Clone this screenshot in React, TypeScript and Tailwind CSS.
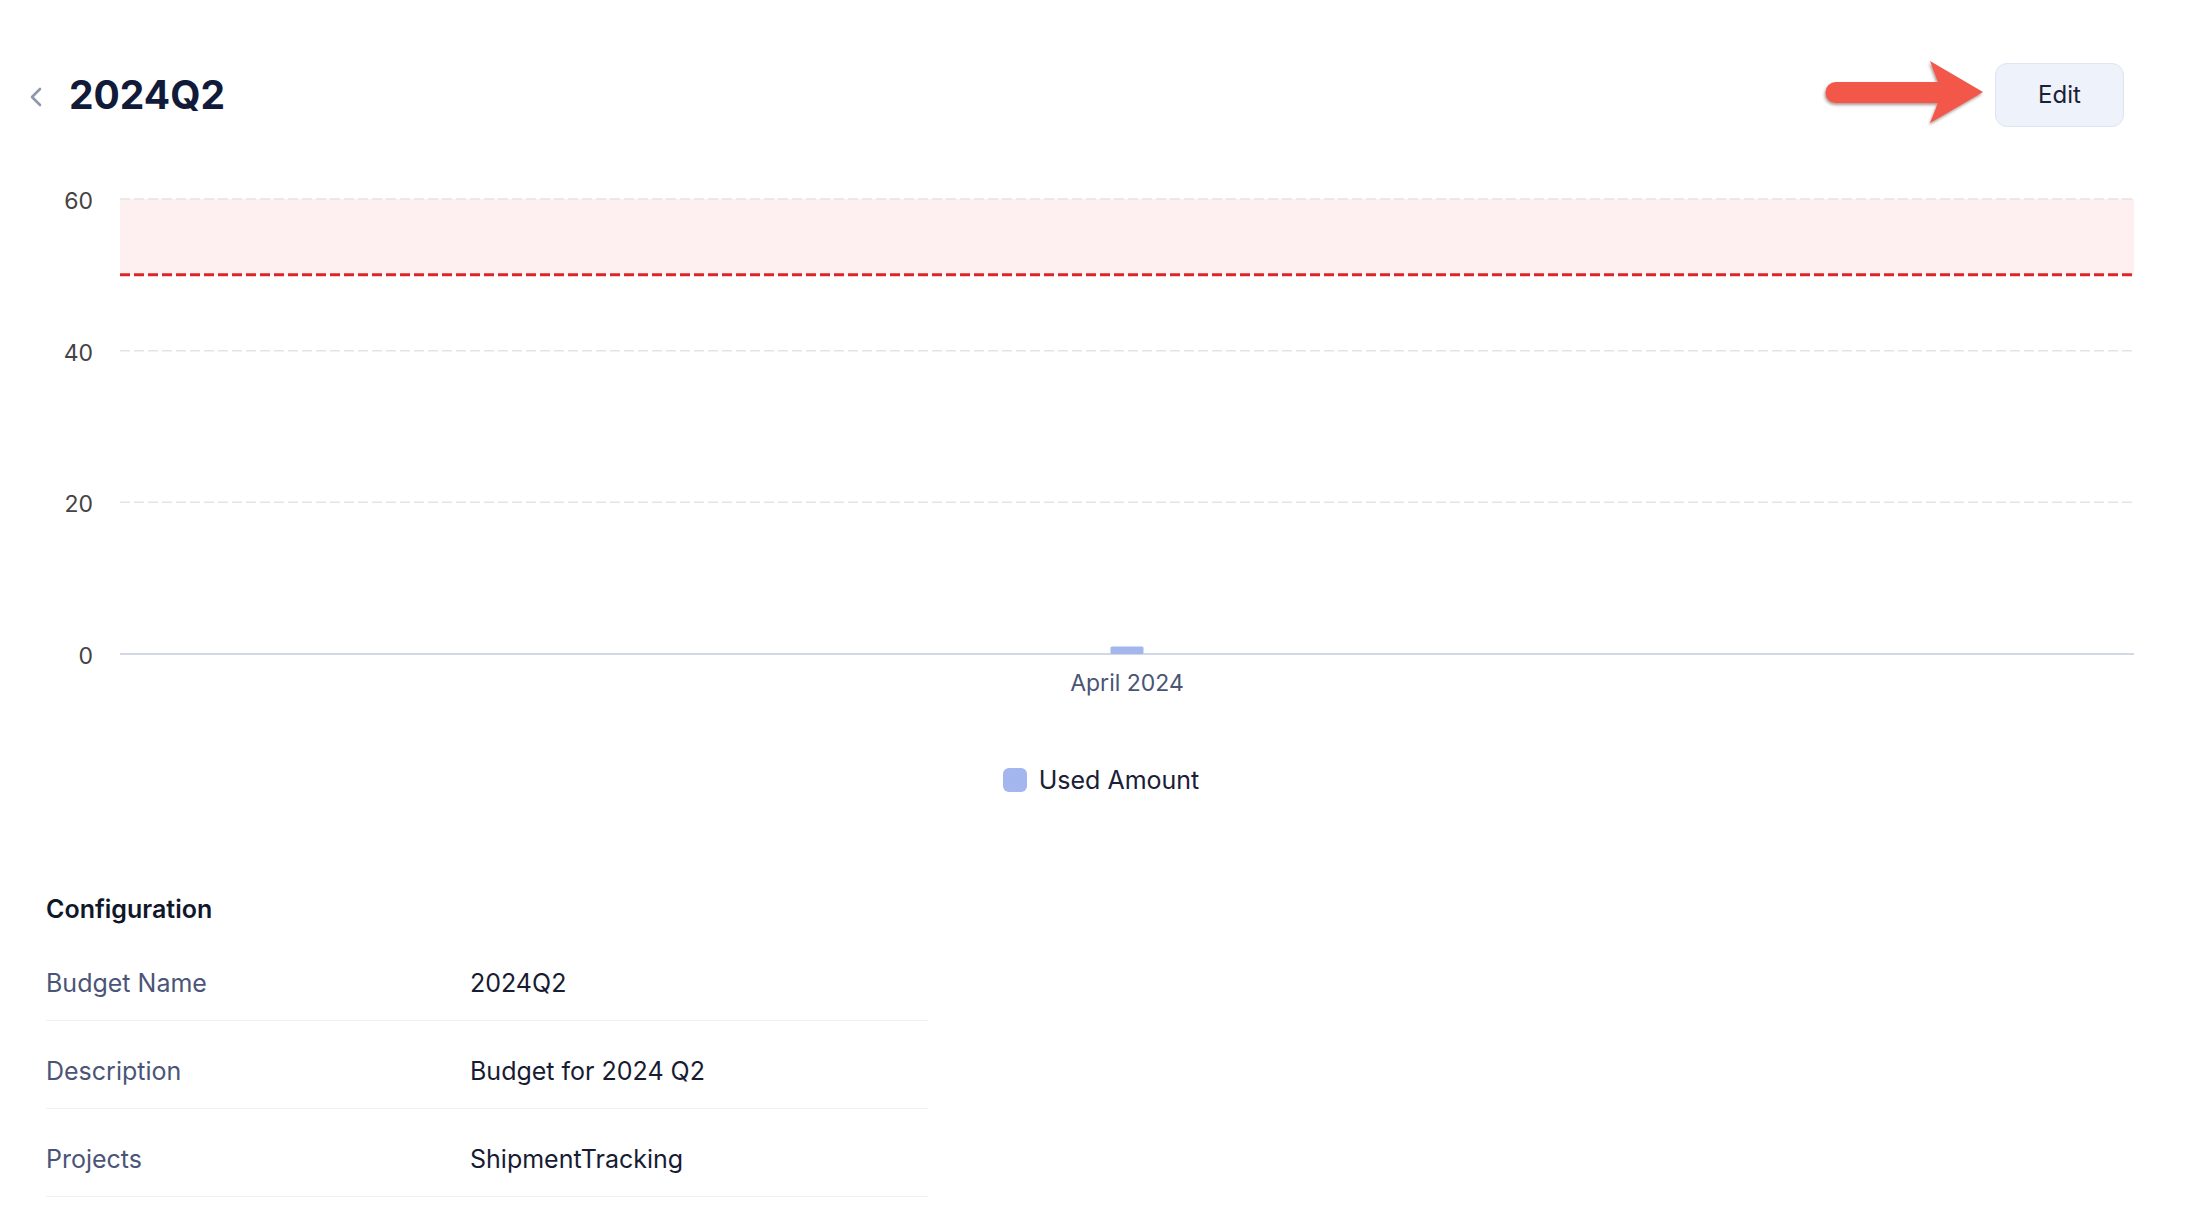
import React from 'react'

const rows = [
    { label: 'Budget Name', value: '2024Q2' },
    { label: 'Description', value: 'Budget for 2024 Q2' },
    { label: 'Projects', value: 'ShipmentTracking' },
]

// plot area in svg coordinates
const PLOT_LEFT = 120
const PLOT_RIGHT = 2134
const ZERO_Y = 484
const PX_PER_UNIT = 7.583
const yFor = (v: number) => ZERO_Y - v * PX_PER_UNIT

const UsageChart = () => {
    const threshold = 50
    const used = 1
    const barCenter = (PLOT_LEFT + PLOT_RIGHT) / 2
    return (
        <svg className="block w-full" height={540} viewBox="0 0 2188 540" fontFamily="Inter, sans-serif">
            {/* over-budget zone */}
            <rect x={PLOT_LEFT} y={yFor(60)} width={PLOT_RIGHT - PLOT_LEFT} height={yFor(threshold) - yFor(60)} fill="#fef0f0" />

            {[60, 40, 20].map((v) => (
                <line key={v} x1={PLOT_LEFT} x2={PLOT_RIGHT} y1={yFor(v)} y2={yFor(v)} stroke="#e4e4e7" strokeWidth={1.5} strokeDasharray="10 4" />
            ))}
            <line x1={PLOT_LEFT} x2={PLOT_RIGHT} y1={ZERO_Y} y2={ZERO_Y} stroke="#d3d9e4" strokeWidth={2} />

            <line x1={PLOT_LEFT} x2={PLOT_RIGHT} y1={yFor(threshold)} y2={yFor(threshold)} stroke="#dc2626" strokeWidth={3} strokeDasharray="10 4" />

            {[60, 40, 20, 0].map((v) => (
                <text key={v} x={93} y={yFor(v) + 10} textAnchor="end" fontSize={23} fill="#444444">{v}</text>
            ))}

            <rect x={barCenter - 16.5} y={ZERO_Y - used * PX_PER_UNIT} width={33} height={used * PX_PER_UNIT} rx={1.5} fill="#a3b6ee" />

            <text x={barCenter} y={521} textAnchor="middle" fontSize={23} fill="#4a5474">April 2024</text>
        </svg>
    )
}

const App = () => {
    return (
        <div className="w-full min-h-screen bg-white font-['Inter',sans-serif]">
            <div className="flex items-center justify-between pt-[63px] pl-[28px] pr-[64px]">
                <div className="flex items-center gap-[26px]">
                    <svg className="mt-[4px]" width="15" height="22" viewBox="0 0 15 22" fill="none">
                        <path d="M12 3L4 11L12 19" stroke="#9097ab" strokeWidth="2.6" strokeLinecap="round" strokeLinejoin="round" />
                    </svg>
                    <h1 className="text-[39px] leading-[48px] font-bold text-[#121a3a]">2024Q2</h1>
                </div>

                <div className="relative">
                    <svg className="absolute -left-[175px] -top-[8px] drop-shadow-[-1px_2px_1.5px_rgba(80,20,10,0.45)]" width="170" height="76" viewBox="0 0 170 76">
                        <path d="M16 27 L118 27 L110 6 L163 37 L110 68 L118 48 L16 48 A10.5 10.5 0 0 1 16 27 Z" fill="#f3574a" />
                    </svg>
                    <button className="h-[64px] w-[129px] rounded-[12px] border border-[#dfe4ee] bg-[#eef2fa] text-[24px] text-[#1a2035]">
                        Edit
                    </button>
                </div>
            </div>

            <div className="mt-[43px]">
                <UsageChart />
            </div>

            <div className="mt-[53px] flex justify-center pl-[14px]">
                <div className="flex items-center gap-[12px]">
                    <span className="h-[24px] w-[24px] rounded-[6px] bg-[#a3b6ee]" />
                    <span className="text-[25px] leading-[34px] text-[#1a2035]">Used Amount</span>
                </div>
            </div>

            <div className="mt-[96px] pl-[46px]">
                <h2 className="text-[25px] leading-[33px] font-semibold text-[#0f172a]">Configuration</h2>
                <div className="mt-[7px] w-[882px]">
                    {rows.map((row) => (
                        <div key={row.label} className="flex border-b border-[#eef0f3] pt-[34px] pb-[20px] text-[25px] leading-[33px]">
                            <div className="w-[424px] text-[#4b5578]">{row.label}</div>
                            <div className="text-[#171c33]">{row.value}</div>
                        </div>
                    ))}
                </div>
            </div>
        </div>
    )
}

export default App
